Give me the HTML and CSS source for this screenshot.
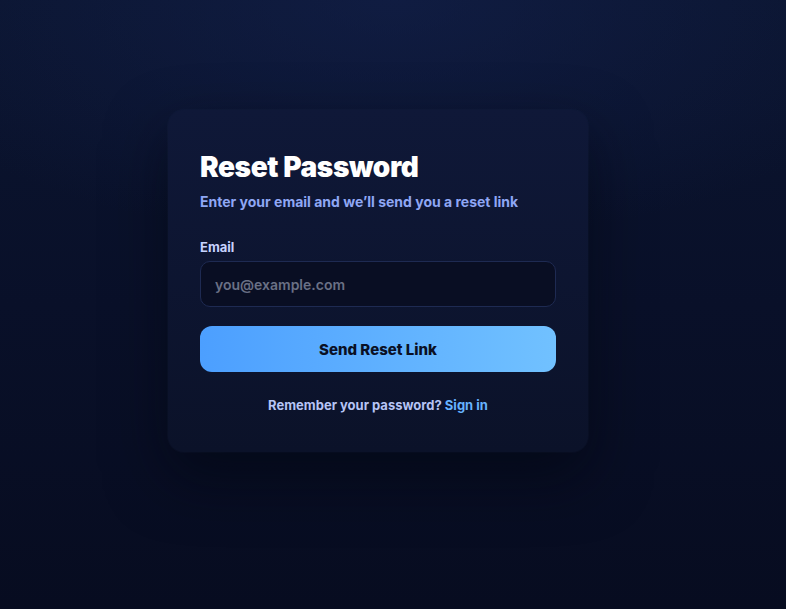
FILE: index.html
```html
<!DOCTYPE html>
<html lang="en">
<head>
<meta charset="utf-8">
<title>Reset Password</title>
<link rel="stylesheet" href="styles.css">
</head>
<body>
<main class="page">
  <section class="card">
    <h1 class="title">Reset Password</h1>
    <p class="subtitle">Enter your email and we’ll send you a reset link</p>
    <form class="form">
      <label class="label" for="email">Email</label>
      <input class="input" id="email" type="email" placeholder="you@example.com">
      <button class="button" type="button">Send Reset Link</button>
    </form>
    <p class="footer">Remember your password? <a class="link" href="#">Sign in</a></p>
  </section>
</main>
</body>
</html>
```
FILE: styles.css
```css
html, body {
  margin: 0;
  height: 100%;
}
body {
  font-family: Inter, "Noto Sans", sans-serif;
  background:
    radial-gradient(ellipse 70% 40% at 50% 0%, rgba(20, 34, 80, 0.55), rgba(20, 34, 80, 0) 100%),
    linear-gradient(180deg, #0b1530 0%, #091029 50%, #070c20 100%);
  color: #fff;
}
.page {
  box-sizing: border-box;
  min-height: 100%;
  display: flex;
  justify-content: center;
  align-items: flex-start;
  padding: 110px 30px 0 0;
}
.card {
  box-sizing: border-box;
  width: 420px;
  padding: 39px 32px 38px;
  border-radius: 16px;
  background: linear-gradient(180deg, #0f1838 0%, #0b1229 100%);
  box-shadow: 0 24px 60px rgba(2, 5, 15, 0.55), 0 0 0 1px rgba(40, 55, 100, 0.12);
}
.title {
  margin: 0;
  font-size: 28px;
  line-height: 36px;
  font-weight: 900;
  letter-spacing: -0.4px;
  color: #ffffff;
}
.subtitle {
  margin: 7px 0 0;
  font-size: 14px;
  line-height: 20px;
  font-weight: 700;
  color: #8fa7f5;
}
.form {
  display: flex;
  flex-direction: column;
  margin-top: 26px;
}
.label {
  font-size: 13px;
  line-height: 18px;
  font-weight: 700;
  color: #c6d2ff;
}
.input {
  box-sizing: border-box;
  margin-top: 5px;
  height: 46px;
  padding: 0 14px;
  border: 1px solid #1e2a52;
  border-radius: 10px;
  background: #090e23;
  color: #e6ebff;
  font-family: inherit;
  font-size: 14px;
  font-weight: 600;
  outline: none;
}
.input::placeholder {
  color: #6a7085;
}
.button {
  margin-top: 19px;
  height: 46px;
  border: 0;
  border-radius: 12px;
  background: linear-gradient(90deg, #4c9fff 0%, #71c1ff 100%);
  color: #0a1024;
  font-family: inherit;
  font-size: 15px;
  font-weight: 800;
  letter-spacing: 0;
  cursor: pointer;
}
.footer {
  margin: 24px 0 0;
  text-align: center;
  font-size: 13px;
  line-height: 18px;
  font-weight: 700;
  color: #b6c4f5;
}
.link {
  color: #66b3ff;
  text-decoration: none;
}
```
